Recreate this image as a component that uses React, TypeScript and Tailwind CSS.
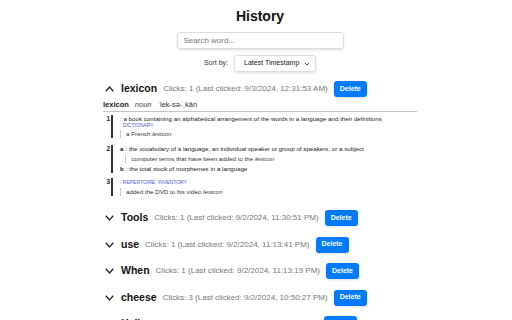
import { ReactNode } from "react";

interface HistoryEntry {
  word: string;
  clicks: number;
  lastClicked: string;
}

const entries: HistoryEntry[] = [
  { word: "Tools", clicks: 1, lastClicked: "9/2/2024, 11:30:51 PM" },
  { word: "use", clicks: 1, lastClicked: "9/2/2024, 11:13:41 PM" },
  { word: "When", clicks: 1, lastClicked: "9/2/2024, 11:13:19 PM" },
  { word: "cheese", clicks: 3, lastClicked: "9/2/2024, 10:50:27 PM" },
  { word: "Hello", clicks: 1, lastClicked: "9/2/2024, 10:41:08 PM" },
];

function Chevron({ up }: { up?: boolean }) {
  return (
    <svg width="9" height="6" viewBox="0 0 9 6" className="ml-[2px] shrink-0">
      <polyline
        points={up ? "0.8,5.2 4.5,1 8.2,5.2" : "0.8,0.8 4.5,5 8.2,0.8"}
        fill="none"
        stroke="#222"
        strokeWidth="1.3"
      />
    </svg>
  );
}

function EntryRow({ entry, open }: { entry: HistoryEntry; open?: boolean }) {
  return (
    <div className="flex h-[16px] items-center">
      <Chevron up={open} />
      <span className="ml-[7px] text-[10.5px] font-bold text-[#111]">{entry.word}</span>
      <span className="ml-[6px] text-[8px] text-[#777]">
        Clicks: {entry.clicks} (Last clicked: {entry.lastClicked})
      </span>
      <button className="ml-[6px] h-[16px] rounded-[3px] bg-[#007bff] px-[6px] text-[7px] font-bold text-white shadow-sm">
        Delete
      </button>
    </div>
  );
}

// example sentence with the thin grey rule on its left
function Example({ children }: { children: ReactNode }) {
  return (
    <div className="mt-[2px] border-l border-[#c8c8c8] pl-[5px] text-[6.2px] leading-[8px] text-[#333]">
      {children}
    </div>
  );
}

function Sense({ n, children, className = "" }: { n: number; children: ReactNode; className?: string }) {
  return (
    <div className={`flex ${className}`}>
      <span className="w-[7px] text-right text-[6.5px] font-bold leading-[8px] text-[#222]">{n}</span>
      <div className="ml-[1px] border-l-2 border-[#333] pl-[7px]">{children}</div>
    </div>
  );
}

function Definition() {
  return (
    <div className="mt-[3px] mb-[14px] text-[#222]">
      <div className="flex items-baseline gap-[6px] text-[7.5px] leading-[9px]">
        <span className="font-bold">lexicon</span>
        <span className="italic text-[#444]">noun</span>
        <span className="text-[#333]">ˈlek-sə-ˌkän</span>
      </div>
      <div className="mt-[2px] h-px bg-[#c4c4c4]" />

      <Sense n={1} className="mt-[3px]">
        <div className="text-[6.2px] leading-[8px]">
          : a book containing an alphabetical arrangement of the words in a language and their definitions
        </div>
        <div className="text-[5px] leading-[5px] text-[#4b5bd8]">: DICTIONARY</div>
        <Example>
          a French <i>lexicon</i>
        </Example>
      </Sense>

      <Sense n={2} className="mt-[7px]">
        <div className="flex text-[6.2px] leading-[8px]">
          <span className="mr-[2px] font-bold">a</span>
          <div>
            <div>: the vocabulary of a language, an individual speaker or group of speakers, or a subject</div>
            <Example>
              computer terms that have been added to the <i>lexicon</i>
            </Example>
          </div>
        </div>
        <div className="mt-[2px] text-[6.2px] leading-[8px]">
          <span className="mr-[2px] font-bold">b</span>: the total stock of morphemes in a language
        </div>
      </Sense>

      <Sense n={3} className="mt-[5px]">
        <div className="text-[5px] leading-[8px] text-[#4b5bd8]">: REPERTOIRE, INVENTORY</div>
        <Example>
          added the DVD to his video <i>lexicon</i>
        </Example>
      </Sense>
    </div>
  );
}

export default function App() {
  return (
    <div className="min-h-screen overflow-hidden bg-white pl-2 font-['Liberation_Sans',Arial,sans-serif]">
      <div className="mx-auto flex w-[314px] flex-col items-center">
        <h1 className="mt-[8px] text-[14px] font-bold leading-[16px] text-[#111]">History</h1>
        <div className="mt-[8px] flex h-[17px] w-[167px] items-center rounded-[3px] border border-[#dcdcdc] px-[6px] shadow-sm">
          <span className="text-[8px] text-[#777]">Search word...</span>
        </div>
        <div className="mt-[6px] flex items-center gap-[6px]">
          <span className="text-[7px] text-[#333]">Sort by:</span>
          <div className="flex h-[17px] w-[82px] items-center justify-between rounded-[3px] border border-[#dcdcdc] pl-[9px] pr-[5px] shadow-sm">
            <span className="text-[7px] text-[#222]">Latest Timestamp</span>
            <svg width="6" height="4" viewBox="0 0 6 4">
              <polyline points="0.7,0.7 3,3 5.3,0.7" fill="none" stroke="#555" strokeWidth="1" />
            </svg>
          </div>
        </div>

        <div className="mt-[9px] w-full">
          <EntryRow open entry={{ word: "lexicon", clicks: 1, lastClicked: "9/3/2024, 12:31:53 AM" }} />
          <Definition />
          {entries.map((e) => (
            <div key={e.word} className="mb-[10.5px]">
              <EntryRow entry={e} />
            </div>
          ))}
        </div>
      </div>
    </div>
  );
}
